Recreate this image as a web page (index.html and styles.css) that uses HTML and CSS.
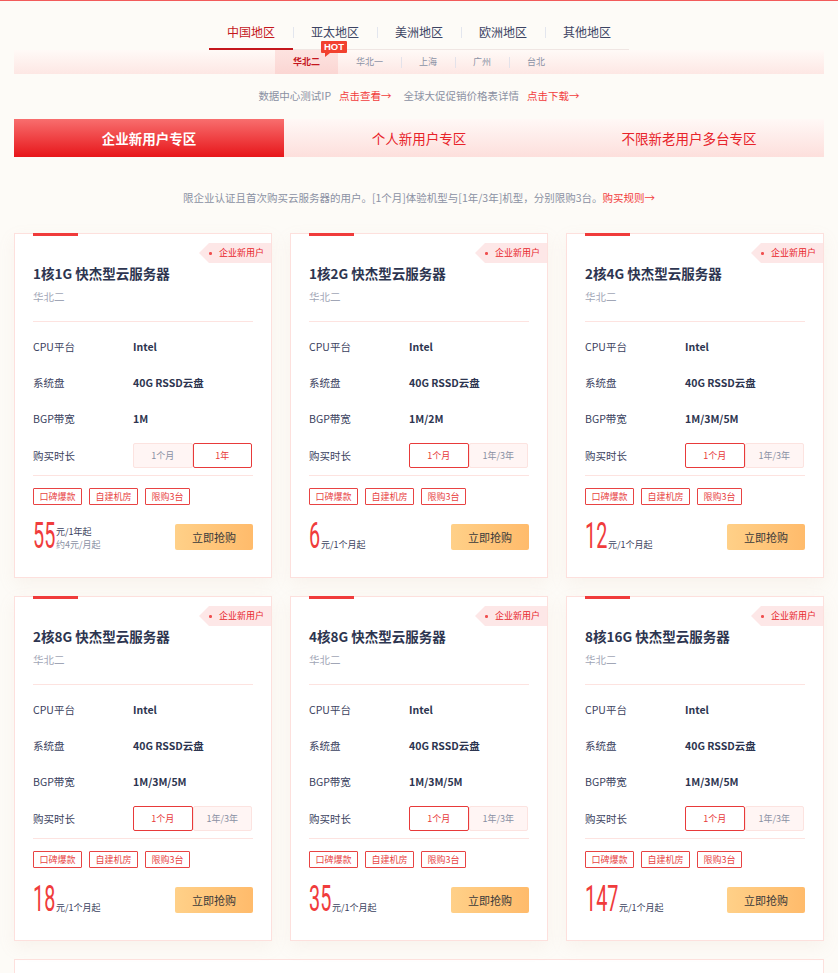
FILE: index.html
```html
<!DOCTYPE html>
<html lang="zh-CN">
<head>
<meta charset="utf-8">
<title>快杰型云服务器</title>
<link rel="stylesheet" href="styles.css">
</head>
<body>
<div class="topline"></div>
<div class="page">
  <ul class="nav">
    <li class="nav-item on">中国地区</li>
    <li class="nav-item">亚太地区</li>
    <li class="nav-item">美洲地区</li>
    <li class="nav-item">欧洲地区</li>
    <li class="nav-item">其他地区</li>
  </ul>
  <ul class="subbar">
    <li class="sub on">华北二<span class="hot">HOT</span></li>
    <li class="sub">华北一</li>
    <li class="sub">上海</li>
    <li class="sub">广州</li>
    <li class="sub">台北</li>
  </ul>
  <p class="info">数据中心测试IP<a class="link">点击查看→</a><span class="sp">全球大促促销价格表详情</span><a class="link">点击下载→</a></p>
  <div class="zones">
    <div class="zone on">企业新用户专区</div>
    <div class="zone">个人新用户专区</div>
    <div class="zone">不限新老用户多台专区</div>
  </div>
  <p class="desc">限企业认证且首次购买云服务器的用户。[1个月]体验机型与[1年/3年]机型，分别限购3台。<a class="link">购买规则→</a></p>

  <div class="grid">
    <div class="card">
      <div class="badge">企业新用户</div>
      <h3 class="title">1核1G 快杰型云服务器</h3>
      <div class="region">华北二</div>
      <div class="hr"></div>
      <div class="specs">
        <div class="row"><span class="lab">CPU平台</span><span class="val">Intel</span></div>
        <div class="row"><span class="lab">系统盘</span><span class="val">40G RSSD云盘</span></div>
        <div class="row"><span class="lab">BGP带宽</span><span class="val">1M</span></div>
        <div class="row dur-row"><span class="lab">购买时长</span><span class="dur"><span>1个月</span><span class="on">1年</span></span></div>
      </div>
      <div class="hr hr2"></div>
      <div class="tags"><span class="tag">口碑爆款</span><span class="tag">自建机房</span><span class="tag">限购3台</span></div>
      <div class="buy">
        <div class="price"><span class="num" style="--d:2"><span>55</span></span><span class="unit">元/1年起<br><em>约4元/月起</em></span></div>
        <span class="btn">立即抢购</span>
      </div>
    </div>

    <div class="card">
      <div class="badge">企业新用户</div>
      <h3 class="title">1核2G 快杰型云服务器</h3>
      <div class="region">华北二</div>
      <div class="hr"></div>
      <div class="specs">
        <div class="row"><span class="lab">CPU平台</span><span class="val">Intel</span></div>
        <div class="row"><span class="lab">系统盘</span><span class="val">40G RSSD云盘</span></div>
        <div class="row"><span class="lab">BGP带宽</span><span class="val">1M/2M</span></div>
        <div class="row dur-row"><span class="lab">购买时长</span><span class="dur"><span class="on">1个月</span><span>1年/3年</span></span></div>
      </div>
      <div class="hr hr2"></div>
      <div class="tags"><span class="tag">口碑爆款</span><span class="tag">自建机房</span><span class="tag">限购3台</span></div>
      <div class="buy">
        <div class="price"><span class="num" style="--d:1"><span>6</span></span><span class="unit">元/1个月起</span></div>
        <span class="btn">立即抢购</span>
      </div>
    </div>

    <div class="card">
      <div class="badge">企业新用户</div>
      <h3 class="title">2核4G 快杰型云服务器</h3>
      <div class="region">华北二</div>
      <div class="hr"></div>
      <div class="specs">
        <div class="row"><span class="lab">CPU平台</span><span class="val">Intel</span></div>
        <div class="row"><span class="lab">系统盘</span><span class="val">40G RSSD云盘</span></div>
        <div class="row"><span class="lab">BGP带宽</span><span class="val">1M/3M/5M</span></div>
        <div class="row dur-row"><span class="lab">购买时长</span><span class="dur"><span class="on">1个月</span><span>1年/3年</span></span></div>
      </div>
      <div class="hr hr2"></div>
      <div class="tags"><span class="tag">口碑爆款</span><span class="tag">自建机房</span><span class="tag">限购3台</span></div>
      <div class="buy">
        <div class="price"><span class="num" style="--d:2"><span>12</span></span><span class="unit">元/1个月起</span></div>
        <span class="btn">立即抢购</span>
      </div>
    </div>

    <div class="card">
      <div class="badge">企业新用户</div>
      <h3 class="title">2核8G 快杰型云服务器</h3>
      <div class="region">华北二</div>
      <div class="hr"></div>
      <div class="specs">
        <div class="row"><span class="lab">CPU平台</span><span class="val">Intel</span></div>
        <div class="row"><span class="lab">系统盘</span><span class="val">40G RSSD云盘</span></div>
        <div class="row"><span class="lab">BGP带宽</span><span class="val">1M/3M/5M</span></div>
        <div class="row dur-row"><span class="lab">购买时长</span><span class="dur"><span class="on">1个月</span><span>1年/3年</span></span></div>
      </div>
      <div class="hr hr2"></div>
      <div class="tags"><span class="tag">口碑爆款</span><span class="tag">自建机房</span><span class="tag">限购3台</span></div>
      <div class="buy">
        <div class="price"><span class="num" style="--d:2"><span>18</span></span><span class="unit">元/1个月起</span></div>
        <span class="btn">立即抢购</span>
      </div>
    </div>

    <div class="card">
      <div class="badge">企业新用户</div>
      <h3 class="title">4核8G 快杰型云服务器</h3>
      <div class="region">华北二</div>
      <div class="hr"></div>
      <div class="specs">
        <div class="row"><span class="lab">CPU平台</span><span class="val">Intel</span></div>
        <div class="row"><span class="lab">系统盘</span><span class="val">40G RSSD云盘</span></div>
        <div class="row"><span class="lab">BGP带宽</span><span class="val">1M/3M/5M</span></div>
        <div class="row dur-row"><span class="lab">购买时长</span><span class="dur"><span class="on">1个月</span><span>1年/3年</span></span></div>
      </div>
      <div class="hr hr2"></div>
      <div class="tags"><span class="tag">口碑爆款</span><span class="tag">自建机房</span><span class="tag">限购3台</span></div>
      <div class="buy">
        <div class="price"><span class="num" style="--d:2"><span>35</span></span><span class="unit">元/1个月起</span></div>
        <span class="btn">立即抢购</span>
      </div>
    </div>

    <div class="card">
      <div class="badge">企业新用户</div>
      <h3 class="title">8核16G 快杰型云服务器</h3>
      <div class="region">华北二</div>
      <div class="hr"></div>
      <div class="specs">
        <div class="row"><span class="lab">CPU平台</span><span class="val">Intel</span></div>
        <div class="row"><span class="lab">系统盘</span><span class="val">40G RSSD云盘</span></div>
        <div class="row"><span class="lab">BGP带宽</span><span class="val">1M/3M/5M</span></div>
        <div class="row dur-row"><span class="lab">购买时长</span><span class="dur"><span class="on">1个月</span><span>1年/3年</span></span></div>
      </div>
      <div class="hr hr2"></div>
      <div class="tags"><span class="tag">口碑爆款</span><span class="tag">自建机房</span><span class="tag">限购3台</span></div>
      <div class="buy">
        <div class="price"><span class="num" style="--d:3"><span>147</span></span><span class="unit">元/1个月起</span></div>
        <span class="btn">立即抢购</span>
      </div>
    </div>
  </div>
  <div class="more"></div>
</div>
</body>
</html>
```
FILE: styles.css
```css
* { box-sizing: border-box; }
html, body { margin: 0; padding: 0; }
body {
  background: #fdfbf7;
  font-family: "Noto Sans CJK SC", "Noto Sans", sans-serif;
  color: #3b4260;
  overflow: hidden;
}
ul { list-style: none; margin: 0; padding: 0; }
p, h3 { margin: 0; }
em { font-style: normal; }

.topline { height: 1px; background: #f25b5b; }
.page { padding: 0 14px; }

/* region tabs */
.nav {
  display: flex;
  width: 420px;
  margin: 14px auto 0;
  border-bottom: 1px solid #f0e6e3;
}
.nav-item {
  position: relative;
  width: 84px;
  height: 35px;
  line-height: 33px;
  text-align: center;
  font-size: 12px;
  color: #3c4463;
  border-bottom: 2px solid transparent;
  margin-bottom: -1px;
}
.nav-item + .nav-item::before {
  content: "";
  position: absolute;
  left: 0;
  top: 12px;
  width: 1px;
  height: 11px;
  background: #e3e6ee;
}
.nav-item.on { color: #c4161c; border-bottom-color: #c4161c; }

/* sub region bar */
.subbar {
  display: flex;
  justify-content: center;
  height: 24px;
  background: linear-gradient(#fffaf7, #fde7e4);
}
.sub {
  position: relative;
  padding: 0 18px;
  font-size: 9px;
  line-height: 24px;
  color: #8c93a6;
}
.sub.on {
  color: #c4161c;
  font-weight: bold;
  background: linear-gradient(#fde3e0, #fbd6d3);
}
.sub:not(.on) + .sub::before {
  content: "";
  position: absolute;
  left: 0;
  top: 7px;
  width: 1px;
  height: 11px;
  background: #e3e2ea;
}
.hot {
  position: absolute;
  left: 46px;
  top: -9px;
  height: 12px;
  padding: 0 3px;
  background: #f2412f;
  color: #fff;
  font: bold 9.5px/12px "Liberation Sans", Arial, sans-serif;
  border-radius: 1px;
}
.hot::after {
  content: "";
  position: absolute;
  left: 4px;
  bottom: -4px;
  border-top: 4px solid #f2412f;
  border-right: 5px solid transparent;
}

/* info line */
.info {
  margin-top: 14px;
  text-align: center;
  font-size: 10.5px;
  line-height: 16px;
  color: #8b91a3;
}
.link { color: #f23d3d; }
.info .link { margin-left: 8px; }
.info .sp { margin-left: 12px; }

/* zones */
.zones { display: flex; margin-top: 15px; height: 38px; }
.zone {
  flex: 1;
  text-align: center;
  line-height: 38px;
  font-size: 13.5px;
  color: #e8232a;
  background: linear-gradient(#fff8f6, #fddfdc);
}
.zone.on {
  color: #fff;
  font-weight: bold;
  background: linear-gradient(#f86e6e, #e7161a);
}

.desc {
  margin-top: 33px;
  text-align: center;
  font-size: 10.5px;
  line-height: 16px;
  color: #8b91a3;
}

/* cards */
.grid {
  margin-top: 27px;
  display: grid;
  grid-template-columns: repeat(3, 1fr);
  gap: 18px;
}
.card {
  position: relative;
  background: #fff;
  border: 1px solid #fde0dd;
  padding: 29px 18px 27px;
  box-shadow: 0 6px 16px rgba(210, 170, 150, 0.10);
}
.card::before {
  content: "";
  position: absolute;
  top: -1px;
  left: 18px;
  width: 45px;
  height: 3px;
  background: #f03b3b;
}
.badge {
  position: absolute;
  top: 9px;
  right: 0;
  width: 72px;
  height: 20px;
  padding-left: 20px;
  font-size: 9px;
  line-height: 20px;
  color: #e8262b;
  background: #fde7e7;
  clip-path: polygon(10px 0, 100% 0, 100% 100%, 10px 100%, 0 50%);
}
.badge::before {
  content: "";
  position: absolute;
  left: 10px;
  top: 9px;
  width: 2.5px;
  height: 2.5px;
  border-radius: 50%;
  background: #f05050;
}
.title {
  font-size: 13.5px;
  line-height: 20px;
  font-weight: bold;
  color: #2d3550;
}
.region {
  margin-top: 5px;
  font-size: 10.5px;
  line-height: 18px;
  color: #a1a6b6;
}
.hr { margin-top: 15px; height: 1px; background: #fde3e0; }
.hr2 { margin-top: 7px; }
.specs { padding-top: 6px; }
.row {
  display: flex;
  align-items: center;
  height: 36px;
  font-size: 10.5px;
}
.lab { width: 100px; color: #3b4260; }
.val { font-weight: bold; color: #2d3550; }
.dur-row { margin-top: 7px; height: 25px; }
.dur { display: flex; width: 119px; }
.dur span {
  flex: 1;
  height: 25px;
  line-height: 23px;
  text-align: center;
  font-size: 9px;
  color: #8a90a3;
  background: #fff5f4;
  border: 1px solid #fce3e0;
  border-radius: 2px;
}
.dur span.on { color: #e83a3a; background: #fff; border-color: #e83a3a; }

.tags { display: flex; gap: 7px; margin-top: 12px; }
.tag {
  height: 17px;
  padding: 0 5.5px;
  border: 1px solid #e84343;
  border-radius: 1px;
  font-size: 9px;
  line-height: 15px;
  color: #e84343;
}

.buy {
  display: flex;
  justify-content: space-between;
  align-items: flex-end;
  margin-top: 18px;
}
.price { display: flex; align-items: flex-end; height: 27px; }
.num {
  display: block;
  width: calc(var(--d) * 11px + 1px);
  height: 27px;
}
.num span {
  display: inline-block;
  font-family: Roboto, sans-serif;
  font-size: 36px;
  line-height: 27px;
  font-weight: 400;
  color: #f03c3c;
  transform: scaleX(0.55);
  transform-origin: 0 0;
  white-space: nowrap;
}
.unit {
  font-size: 9px;
  line-height: 13.6px;
  color: #3b4260;
  margin-bottom: -2px;
}
.unit em { color: #8a90a3; }
.btn {
  width: 78px;
  height: 26px;
  line-height: 26px;
  text-align: center;
  font-size: 11px;
  color: #3a3a3a;
  border-radius: 2px;
  background: linear-gradient(90deg, #ffd088, #ffbb6b);
}

.more {
  margin-top: 18px;
  height: 60px;
  background: #fff;
  border: 1px solid #fde0dd;
}
```
